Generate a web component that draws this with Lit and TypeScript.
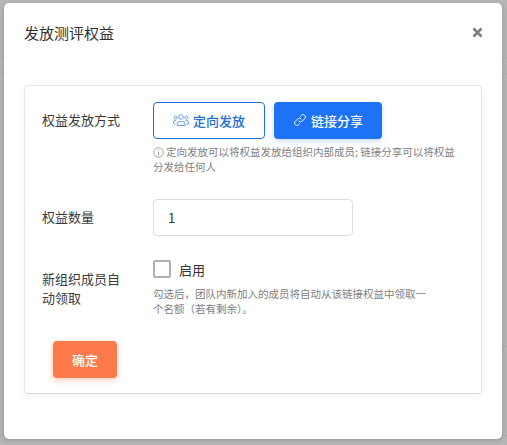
import { LitElement, html, css } from "lit";
import { customElement } from "lit/decorators.js";

@customElement("app-root")
export class AppRoot extends LitElement {
  static styles = css`
    :host {
      display: block;
      width: 507px;
      height: 445px;
      box-sizing: border-box;
      padding: 3px 5px 6px 4px;
      overflow: hidden;
      background-color: #b5b5b5;
      background-image:
        linear-gradient(#aaaaaa, #aaaaaa), linear-gradient(#aaaaaa, #aaaaaa),
        linear-gradient(#aaaaaa, #aaaaaa), linear-gradient(#aaaaaa, #aaaaaa);
      background-size: 100% 1px;
      background-repeat: no-repeat;
      background-position: 0 57px, 0 73px, 0 346px, 0 435px;
      font-family: "Noto Sans CJK SC", "Liberation Sans", sans-serif;
      color: #333;
    }
    .modal {
      height: 100%;
      box-sizing: border-box;
      background: #fff;
      border-radius: 5px;
      padding: 0 20px 0 20px;
      box-shadow: 0 1px 4px rgba(0, 0, 0, 0.2);
      display: flex;
      flex-direction: column;
    }
    .head {
      height: 82px;
      flex: none;
      display: flex;
      justify-content: space-between;
      align-items: flex-start;
      padding-top: 19px;
      box-sizing: border-box;
    }
    .title {
      font-size: 15px;
      line-height: 22px;
      color: #2f2f2f;
    }
    .close {
      width: 11px;
      height: 11px;
      margin: 5px -1px 0 0;
      display: block;
    }
    .card {
      height: 309px;
      flex: none;
      box-sizing: border-box;
      border: 1px solid #e8e8e8;
      border-bottom-color: #d8d8d8;
      border-radius: 4px;
      box-shadow: 0 2px 8px rgba(0, 0, 0, 0.05);
      padding: 16px 17px 0;
      display: flex;
      flex-direction: column;
    }
    .row {
      display: grid;
      grid-template-columns: 111px 1fr;
    }
    .label {
      font-size: 13px;
      line-height: 20px;
      color: #3a3a3a;
    }
    .label.first { padding-top: 8px; }
    .label.mid { padding-top: 8px; }
    .buttons {
      display: flex;
      gap: 9px;
    }
    .btn {
      height: 37px;
      box-sizing: border-box;
      border-radius: 4px;
      font-size: 13px;
      font-weight: 500;
      display: flex;
      align-items: center;
      justify-content: center;
      gap: 4px;
      padding-bottom: 1px;
    }
    .btn svg { display: block; }
    .outline {
      width: 112px;
      border: 1px solid #1f6fd6;
      color: #1f6fd6;
      background: #fff;
    }
    .solid {
      width: 108px;
      background: #1e72f5;
      color: #fff;
      box-shadow: 0 2px 5px rgba(30, 114, 245, 0.25);
    }
    .hint {
      font-size: 10.5px;
      line-height: 15px;
      color: #808080;
      margin: 0;
    }
    .hint.a { margin-top: 5px; width: 310px; }
    .hint.b { margin-top: 8px; width: 280px; }
    .info {
      display: inline-block;
      width: 11px;
      height: 11px;
      margin-right: 2px;
      vertical-align: -1.5px;
    }
    .row2 { margin-top: 25px; }
    .input {
      width: 200px;
      height: 37px;
      box-sizing: border-box;
      border: 1px solid #dedede;
      border-radius: 4px;
      padding: 0 0 1px 14px;
      display: flex;
      align-items: center;
      font-size: 13px;
      color: #333;
    }
    .row3 { margin-top: 24px; }
    .label.multi { line-height: 19px; padding-top: 9px; width: 84px; }
    .check {
      display: flex;
      align-items: center;
      gap: 8px;
      height: 18px;
      font-size: 13px;
      color: #333;
    }
    .box {
      width: 18px;
      height: 18px;
      box-sizing: border-box;
      border: 2px solid #b0b0b0;
      border-radius: 2px;
      background: #fff;
    }
    .confirm {
      width: 64px;
      height: 37px;
      margin: 0 0 0 11px;
      flex: none;
      box-sizing: border-box;
      padding-bottom: 1px;
      border-radius: 4px;
      background: #ff7a4a;
      color: #fff;
      font-size: 13px;
      font-weight: 500;
      display: flex;
      align-items: center;
      justify-content: center;
      box-shadow: 0 2px 6px rgba(255, 122, 74, 0.4);
    }
    .actions { margin-top: 25px; }
  `;

  render() {
    return html`
      <div class="modal">
        <div class="head">
          <div class="title">发放测评权益</div>
          <svg class="close" viewBox="0 0 11 11">
            <path d="M1.5 1.5 9.5 9.5M9.5 1.5 1.5 9.5" stroke="#7f7f7f" stroke-width="2.6" fill="none" />
          </svg>
        </div>
        <div class="card">
          <div class="row">
            <div class="label first">权益发放方式</div>
            <div>
              <div class="buttons">
                <div class="btn outline">
                  <svg width="16" height="14" viewBox="0 0 16 14" fill="none" stroke="#5b95e4" stroke-width="0.9">
                    <circle cx="8" cy="4" r="2.3" />
                    <path d="M4 12.5v-1.5a2.5 2.5 0 0 1 2.5-2.5h3a2.5 2.5 0 0 1 2.5 2.5v1.5z" />
                    <circle cx="2.6" cy="4.6" r="1.5" />
                    <circle cx="13.4" cy="4.6" r="1.5" />
                    <path d="M2.6 11H1a.6.6 0 0 1-.5-.6V9a1.6 1.6 0 0 1 1.6-1.5h1M13.4 11H15a.6.6 0 0 0 .5-.6V9a1.6 1.6 0 0 0-1.6-1.5h-1" />
                  </svg>
                  <span>定向发放</span>
                </div>
                <div class="btn solid">
                  <svg width="14" height="14" viewBox="0 0 14 14" fill="none" stroke="#fff" stroke-width="0.9" stroke-linecap="round">
                    <path d="M5.8 8.2a2.4 2.4 0 0 0 3.4 0l2.5-2.5a2.4 2.4 0 0 0-3.4-3.4L7.4 3.2" />
                    <path d="M8.2 5.8a2.4 2.4 0 0 0-3.4 0L2.3 8.3a2.4 2.4 0 0 0 3.4 3.4l.9-.9" />
                  </svg>
                  <span>链接分享</span>
                </div>
              </div>
              <p class="hint a"><svg class="info" viewBox="0 0 11 11" fill="none" stroke="#8a8a8a" stroke-width="0.8"><circle cx="5.5" cy="5.5" r="4.8" /><path d="M5.5 4.6V8.4M5.5 2.6V3.6" /></svg>定向发放可以将权益发放给组织内部成员; 链接分享可以将权益分发给任何人</p>
            </div>
          </div>
          <div class="row row2">
            <div class="label mid">权益数量</div>
            <div class="input">1</div>
          </div>
          <div class="row row3">
            <div class="label multi">新组织成员自动领取</div>
            <div>
              <div class="check"><span class="box"></span><span>启用</span></div>
              <p class="hint b">勾选后，团队内新加入的成员将自动从该链接权益中领取一个名额（若有剩余）。</p>
            </div>
          </div>
          <div class="actions"><div class="confirm">确定</div></div>
        </div>
      </div>
    `;
  }
}
